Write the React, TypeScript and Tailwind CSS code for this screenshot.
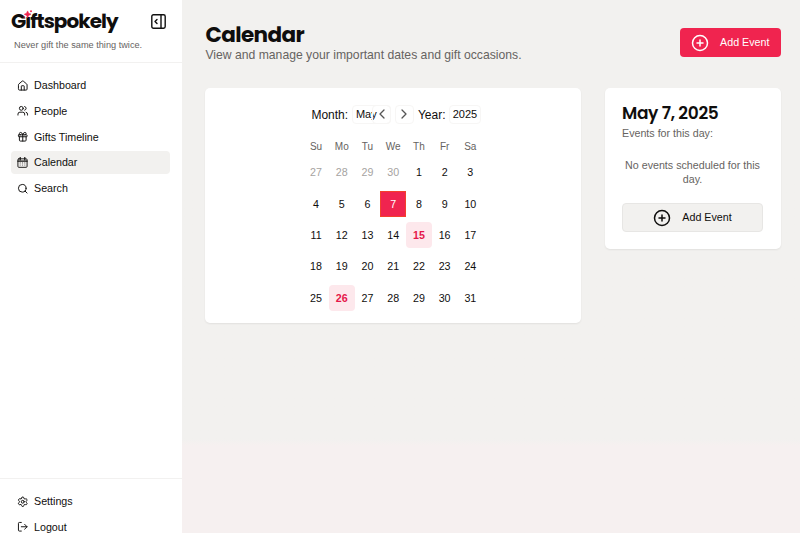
import type { ReactNode } from "react";
import {
  ChevronLeft,
  ChevronRight,
  CirclePlus,
  Gift,
  House,
  LogOut,
  Search,
  Settings,
  Users,
} from "lucide-react";

const display = "font-['Poppins','Inter',sans-serif]";

function NavItem({ icon, label, active }: { icon: ReactNode; label: string; active?: boolean }) {
  return (
    <a
      className={`flex h-[23px] shrink-0 items-center gap-[6px] rounded-[4px] pl-[6px] text-[10.7px] leading-none ${
        active ? "bg-[#f2f1ef]" : ""
      }`}
    >
      {icon}
      <span>{label}</span>
    </a>
  );
}

function CalendarIcon() {
  return (
    <svg className="h-[11px] w-[11px] shrink-0" viewBox="0 0 24 24" fill="none" stroke="currentColor" strokeWidth="2" strokeLinecap="round" strokeLinejoin="round">
      <rect x="2" y="4" width="20" height="18.5" rx="2" />
      <path d="M2 9h20M7 1v5M17 1v5" strokeWidth="2.6" />
      <path d="M7 13h.01M12 13h.01M17 13h.01M7 17.5h.01M12 17.5h.01M17 17.5h.01" strokeWidth="2.6" strokeOpacity=".6" />
    </svg>
  );
}

function Logo() {
  return (
    <div className="relative">
      <span className={`block text-[20px] leading-[23px] font-bold tracking-[-0.95px] ${display}`}>Giftspokely</span>
      <svg className="absolute top-0 left-[12px] h-[9px] w-[10px]" viewBox="0 0 10 9" fill="#f0244f">
        <rect x="2.4" y="1" width="4.8" height="5.6" fill="#fff" />
        <path d="M4.6 .9 5.7 3.2 8 4.3 5.7 5.4 4.6 7.7 3.5 5.4 1.2 4.3 3.5 3.2Z" stroke="#f0244f" strokeWidth=".5" />
        <circle cx="8" cy="1.2" r="1" />
        <circle cx="1.2" cy="7" r=".8" />
      </svg>
    </div>
  );
}

function Sidebar() {
  const ic = "h-[11.5px] w-[11.5px] -mr-[0.5px] shrink-0";
  return (
    <aside className="flex h-[533px] w-[182px] shrink-0 flex-col overflow-hidden bg-white">
      <header className="h-[63px] shrink-0 border-b border-[#f2f1f0] pt-[10px] pr-[16px] pl-[11px]">
        <div className="flex items-start justify-between">
          <Logo />
          <svg className="mt-[4px] h-[15px] w-[15px]" viewBox="0 0 15 15" fill="none" stroke="#111" strokeWidth="1.4" strokeLinecap="round" strokeLinejoin="round">
            <rect x="0.8" y="0.8" width="13.4" height="13.4" rx="1.6" />
            <path d="M10 1v13M6 5.4 4 7.5 6 9.6" />
          </svg>
        </div>
        <p className="mt-[6px] ml-[3px] text-[9.2px] leading-[12px] whitespace-nowrap text-[#666361]">Never gift the same thing twice.</p>
      </header>
      <nav className="flex flex-1 flex-col gap-[2.7px] pr-[12px] pl-[11px] pt-[11px]">
        <NavItem icon={<House className={ic} />} label="Dashboard" />
        <NavItem icon={<Users className={ic} />} label="People" />
        <NavItem icon={<Gift className={ic} />} label="Gifts Timeline" />
        <NavItem icon={<CalendarIcon />} label="Calendar" active />
        <NavItem icon={<Search className={ic} />} label="Search" />
      </nav>
      <footer className="flex h-[55px] shrink-0 flex-col gap-[2.7px] border-t border-[#f2f1f0] pr-[12px] pl-[11px] pt-[11px]">
        <NavItem icon={<Settings className={ic} />} label="Settings" />
        <NavItem icon={<LogOut className={ic} />} label="Logout" />
      </footer>
    </aside>
  );
}

const weekdays = ["Su", "Mo", "Tu", "We", "Th", "Fr", "Sa"];
const days = [27, 28, 29, 30, ...Array.from({ length: 31 }, (_, i) => i + 1)];

function dayStyle(day: number, index: number) {
  if (index < 4) return "text-[#a6a3a1]";
  if (day === 7) return "bg-[#f0244f] text-white border border-[#f4402c]";
  if (day === 15 || day === 26) return "rounded-[4px] bg-[#fde8ec] font-bold text-[#e5174a]";
  return "";
}

function CalendarCard() {
  return (
    <section className="h-[234.5px] w-[375.5px] shrink-0 rounded-[5px] bg-white pt-[16.5px] shadow-[0_1px_2px_rgba(0,0,0,0.07)]">
      <div className="ml-[106px] flex h-[20px] items-center text-[12px] leading-none">
        <span className="w-[40.5px] whitespace-nowrap">Month:</span>
        <span className="flex h-[19px] w-[39px] items-center rounded-[4px] border border-[#f7f6f5] pl-[3px] text-[11px]">May</span>
        <span className="-ml-[18.5px] flex h-[19px] w-[19px] items-center justify-center rounded-[4px] border border-[#f7f6f5] text-[#555]">
          <ChevronLeft className="h-[16px] w-[16px] shrink-0 -translate-y-px" strokeWidth={1.9} />
        </span>
        <span className="ml-[3.5px] flex h-[19px] w-[19px] items-center justify-center rounded-[4px] border border-[#f7f6f5] text-[#555]">
          <ChevronRight className="h-[16px] w-[16px] shrink-0 -translate-y-px" strokeWidth={1.9} />
        </span>
        <span className="ml-[4px] w-[31px] whitespace-nowrap">Year:</span>
        <span className="flex h-[19px] w-[32px] items-center justify-center rounded-[4px] border border-[#f7f6f5] text-[11px]">2025</span>
      </div>
      <div className="ml-[97.8px] grid w-[180px] grid-cols-7 pt-[14px] text-center text-[10px] leading-[16px] text-[#666361]">
        {weekdays.map((d) => (
          <span key={d}>{d}</span>
        ))}
      </div>
      <div className="ml-[97.8px] grid w-[180px] grid-cols-7 gap-y-[5.4px] pt-[5px] text-[10.7px]">
        {days.map((d, i) => (
          <span key={i} className={`flex h-[26px] items-center justify-center leading-none ${dayStyle(d, i)}`}>
            {d}
          </span>
        ))}
      </div>
    </section>
  );
}

function DayCard() {
  return (
    <section className="h-[161px] w-[176px] shrink-0 rounded-[5px] bg-white px-[17.5px] pt-[13px] shadow-[0_1px_2px_rgba(0,0,0,0.07)]">
      <h2 className={`text-[17px] leading-[24px] font-semibold tracking-[-0.35px] whitespace-nowrap ${display}`}>May 7, 2025</h2>
      <p className="mt-[1px] text-[10.7px] leading-[15px] text-[#666361]">Events for this day:</p>
      <p className="mt-[17px] text-center text-[10.7px] leading-[14px] text-[#666361]">No events scheduled for this day.</p>
      <button className="mt-[17px] flex h-[29px] w-full items-center justify-center gap-[11px] rounded-[4px] border border-[#e7e6e4] bg-[#f2f1ef] text-[10.7px]">
        <CirclePlus className="h-[18px] w-[18px]" strokeWidth={2} />
        Add Event
      </button>
    </section>
  );
}

export default function App() {
  return (
    <div className="flex h-[533px] w-[800px] overflow-hidden bg-white font-['Liberation_Sans',Arial,sans-serif] text-[#0f0e0d]">
      <Sidebar />
      <main className="flex-1 bg-linear-to-b from-[#f2f1ef] from-[439px] to-[#f6f0f0] to-[446px] pt-[21px] pr-[19.5px] pl-[23.4px]">
        <header className="flex h-[67px] items-start justify-between">
          <div>
            <h1 className={`translate-y-[0.6px] text-[21.5px] leading-[26px] font-bold tracking-[-0.6px] ${display}`}>Calendar</h1>
            <p className="text-[12.2px] leading-[17px] text-[#666361]">View and manage your important dates and gift occasions.</p>
          </div>
          <button className="mt-[7px] flex h-[29px] w-[100.5px] items-center justify-center gap-[11px] rounded-[4px] bg-[#f0244f] text-[10.7px] text-white">
            <CirclePlus className="h-[18px] w-[18px]" strokeWidth={2} />
            Add Event
          </button>
        </header>
        <div className="flex items-start justify-between">
          <CalendarCard />
          <DayCard />
        </div>
      </main>
    </div>
  );
}
